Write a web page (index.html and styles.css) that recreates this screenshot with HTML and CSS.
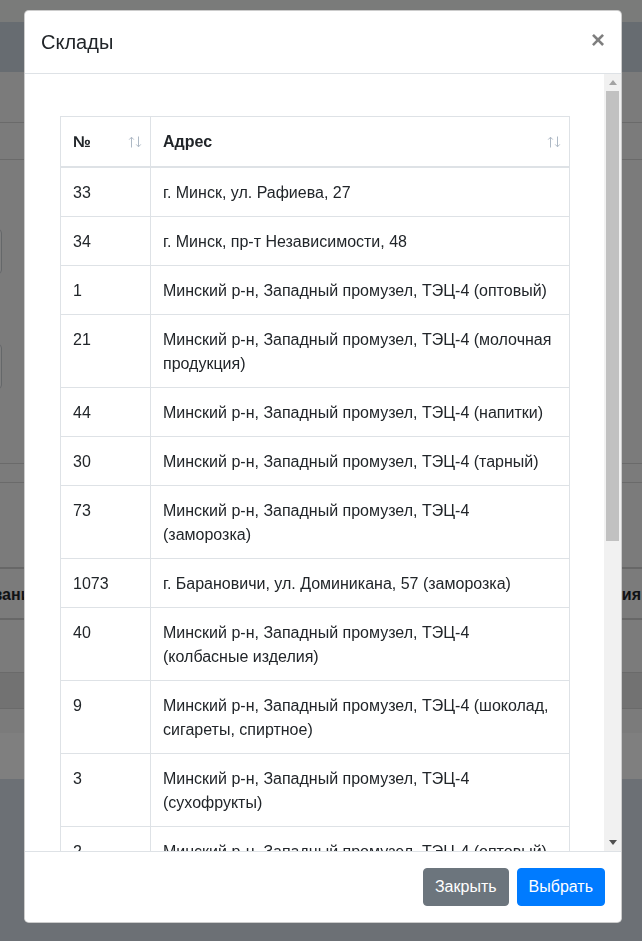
FILE: index.html
```html
<!DOCTYPE html>
<html lang="ru">
<head>
<meta charset="utf-8">
<title>Склады</title>
<link rel="stylesheet" href="styles.css">
</head>
<body>
<div class="page">
  <div class="topbar"></div>
  <div class="navbar"></div>
  <div class="toolbar"></div>
  <div class="subbar"></div>
  <div class="filters">
    <div class="field-box"></div>
    <div class="field-box"></div>
  </div>
  <div class="strip"></div>
  <div class="list-area">
    <table class="bg-table">
      <thead>
        <tr><th class="bg-name">Наименование</th><th class="bg-mid"></th><th class="bg-date">Дата создания</th></tr>
      </thead>
      <tbody>
        <tr class="r1"><td></td><td></td><td></td></tr>
        <tr class="r2"><td></td><td></td><td></td></tr>
      </tbody>
    </table>
  </div>
  <div class="pager"></div>
</div>

<div class="backdrop"></div>

<div class="modal">
  <div class="modal-dialog">
    <div class="modal-content">
      <div class="modal-header">
        <h5 class="modal-title">Склады</h5>
        <button class="close" type="button"><span>×</span></button>
      </div>
      <div class="modal-body-wrap">
        <div class="modal-body">
          <table class="table">
            <colgroup><col class="c-num"><col class="c-addr"></colgroup>
            <thead>
              <tr>
                <th><div class="th-inner"><span>№</span><svg class="sort" width="14" height="12" viewBox="0 0 14 12"><path d="M3.5 11.5V1.2M1.2 3.6L3.5 1.2L5.8 3.6M10.5 0.5V10.8M8.2 8.4L10.5 10.8L12.8 8.4"/></svg></div></th>
                <th><div class="th-inner"><span>Адрес</span><svg class="sort" width="14" height="12" viewBox="0 0 14 12"><path d="M3.5 11.5V1.2M1.2 3.6L3.5 1.2L5.8 3.6M10.5 0.5V10.8M8.2 8.4L10.5 10.8L12.8 8.4"/></svg></div></th>
              </tr>
            </thead>
            <tbody>
              <tr><td>33</td><td>г. Минск, ул. Рафиева, 27</td></tr>
              <tr><td>34</td><td>г. Минск, пр-т Независимости, 48</td></tr>
              <tr><td>1</td><td>Минский р-н, Западный промузел, ТЭЦ-4 (оптовый)</td></tr>
              <tr><td>21</td><td>Минский р-н, Западный промузел, ТЭЦ-4 (молочная продукция)</td></tr>
              <tr><td>44</td><td>Минский р-н, Западный промузел, ТЭЦ-4 (напитки)</td></tr>
              <tr><td>30</td><td>Минский р-н, Западный промузел, ТЭЦ-4 (тарный)</td></tr>
              <tr><td>73</td><td>Минский р-н, Западный промузел, ТЭЦ-4 (заморозка)</td></tr>
              <tr><td>1073</td><td>г. Барановичи, ул. Доминикана, 57 (заморозка)</td></tr>
              <tr><td>40</td><td>Минский р-н, Западный промузел, ТЭЦ-4 (колбасные изделия)</td></tr>
              <tr><td>9</td><td>Минский р-н, Западный промузел, ТЭЦ-4 (шоколад, сигареты, спиртное)</td></tr>
              <tr><td>3</td><td>Минский р-н, Западный промузел, ТЭЦ-4 (сухофрукты)</td></tr>
              <tr><td>2</td><td>Минский р-н, Западный промузел, ТЭЦ-4 (оптовый)</td></tr>
              <tr><td>5</td><td>г. Минск, ул. Рафиева, 27</td></tr>
            </tbody>
          </table>
        </div>
        <div class="scrollbar">
          <div class="sb-btn"><svg width="8" height="5" viewBox="0 0 8 5"><path d="M0 5 L4 0 L8 5 Z" fill="#a3a3a3"/></svg></div>
          <div class="sb-track"><div class="sb-thumb"></div></div>
          <div class="sb-btn"><svg width="8" height="5" viewBox="0 0 8 5"><path d="M0 0 L8 0 L4 5 Z" fill="#505050"/></svg></div>
        </div>
      </div>
      <div class="modal-footer">
        <button class="btn btn-secondary" type="button">Закрыть</button>
        <button class="btn btn-primary" type="button">Выбрать</button>
      </div>
    </div>
  </div>
</div>
</body>
</html>
```
FILE: styles.css
```css
* { box-sizing: border-box; }
html, body { margin: 0; padding: 0; }
body {
  font-family: "Liberation Sans", Arial, sans-serif;
  font-size: 16px;
  line-height: 1.5;
  color: #212529;
  background: #d8e0ea;
  overflow: hidden;
}

/* ---------- background page (under the backdrop) ---------- */
.page { width: 642px; }
.topbar { height: 22px; background: #f5f6f5; }
.navbar { height: 50px; background: #cfd9e3; }
.toolbar { height: 51px; background: #f6f6f6; border-bottom: 1px solid #d4d4d4; }
.subbar { height: 37px; background: #f6f6f6; border-bottom: 1px solid #d4d4d4; }
.filters {
  height: 304px;
  background: #f6f6f6;
  border-bottom: 1px solid #d4d4d4;
  padding-top: 69px;
  display: flex;
  flex-direction: column;
  gap: 70px;
}
.field-box {
  width: 202px;
  height: 45px;
  margin-left: -200px;
  border: 1px solid #c9ced3;
  border-radius: 4px;
  background: #fff;
}
.strip { height: 19px; background: #f6f6f6; border-bottom: 1px solid #d4d4d4; }
.list-area { background: #f6f6f6; padding-top: 84px; height: 250px; }
.bg-table {
  border-collapse: collapse;
  margin-left: -90px;
  width: 760px;
  font-weight: 700;
}
.bg-table th {
  border-top: 2px solid #cfcfcf;
  border-bottom: 2px solid #cfcfcf;
  height: 51px;
  padding: 2px 12px 0 12px;
  text-align: left;
  color: #212529;
  font-size: 16px;
  white-space: nowrap;
}
.bg-name { width: 200px; }
.bg-table th.bg-date { width: 160px; text-align: right; padding-right: 29px; }
.bg-table td { border-bottom: 1px solid #d4d4d4; }
.bg-table .r1 td { height: 53px; }
.bg-table .r2 td { height: 36px; background: #e4e4e4; }
.pager { height: 46px; background: #ffffff; }

.backdrop {
  position: fixed;
  inset: 0;
  background: rgba(0, 0, 0, 0.5);
}

/* ---------- modal ---------- */
.modal { position: fixed; inset: 0; }
.modal-dialog { width: 598px; margin: 10px 0 0 24px; }
.modal-content {
  background: #fff;
  border: 1px solid rgba(0, 0, 0, 0.2);
  border-radius: 4.8px;
  display: flex;
  flex-direction: column;
  overflow: hidden;
}
.modal-header {
  display: flex;
  align-items: flex-start;
  justify-content: space-between;
  padding: 16px;
  border-bottom: 1px solid #dee2e6;
}
.modal-title {
  margin: 0;
  font-size: 20px;
  font-weight: 500;
  line-height: 1.5;
  color: #212529;
}
.close {
  padding: 17px 16px 15px 16px;
  margin: -16px -16px -16px auto;
  background: transparent;
  border: 0;
  font-family: "Liberation Sans", Arial, sans-serif;
  font-size: 24px;
  font-weight: 700;
  line-height: 1;
  color: #000;
  opacity: 0.5;
  text-shadow: 0 1px 0 #fff;
  cursor: pointer;
}

.modal-body-wrap { display: flex; height: 777px; }
.modal-body {
  flex: 1;
  overflow: hidden;
  padding: 42px 35px 0 35px;
}

.table {
  width: 509px;
  table-layout: fixed;
  border-collapse: collapse;
  color: #212529;
}
.c-num { width: 90px; }
.c-addr { width: 419px; }
.table th, .table td {
  border: 1px solid #dee2e6;
  padding: 12px;
  vertical-align: top;
  text-align: left;
}
.table tbody td { padding: 13px 12px 11px 12px; }
.table thead th {
  border-bottom: 2px solid #dee2e6;
  font-weight: 700;
  padding: 13px 8px 12px 12px;
}
.th-inner { display: flex; justify-content: space-between; align-items: center; }
.sort {
  flex: none;
  fill: none;
  stroke: #aeb9c5;
  stroke-width: 1;
  margin-top: -1px;
}

.scrollbar {
  width: 17px;
  background: #f1f1f1;
  display: flex;
  flex-direction: column;
}
.sb-btn {
  height: 17px;
  display: flex;
  align-items: center;
  justify-content: center;
}
.sb-track { flex: 1; }
.sb-thumb { height: 450px; margin: 0 2px; background: #c1c1c1; }

.modal-footer {
  display: flex;
  justify-content: flex-end;
  align-items: center;
  padding: 12px;
  border-top: 1px solid #dee2e6;
}
.btn {
  margin: 4px;
  font-family: "Liberation Sans", Arial, sans-serif;
  font-size: 16px;
  line-height: 1.5;
  padding: 6px 11px;
  border: 1px solid transparent;
  border-radius: 4px;
  color: #fff;
  cursor: pointer;
}
.btn-secondary { background: #6c757d; border-color: #6c757d; }
.btn-primary { background: #007bff; border-color: #007bff; }
```
